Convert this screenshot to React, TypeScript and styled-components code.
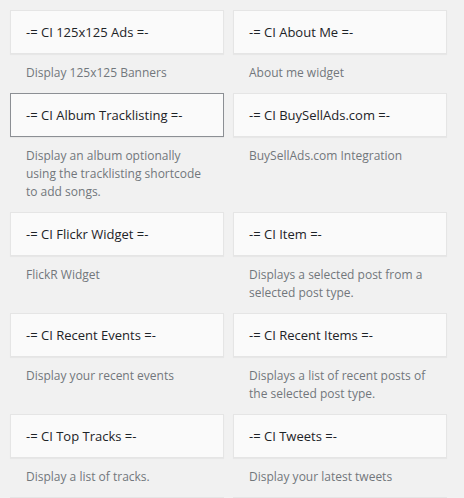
import React from "react";
import styled, { createGlobalStyle } from "styled-components";

const Global = createGlobalStyle`
  html, body { margin: 0; padding: 0; background: #f1f1f1; }
  body { font-family: "Open Sans", "Liberation Sans", sans-serif; }
`;

const Grid = styled.div`
  display: grid;
  grid-template-columns: 214px 214px;
  column-gap: 9px;
  padding: 10px 0 0 10px;
  align-items: start;
`;

const Item = styled.div`
  display: flex;
  flex-direction: column;
`;

const Card = styled.div<{ $focused?: boolean }>`
  height: 42px;
  display: flex;
  align-items: center;
  padding: 0 15px;
  background: #fafafa;
  border: 1px solid ${(p) => (p.$focused ? "#8c8f94" : "#e5e5e5")};
  box-shadow: 0 1px 1px rgba(0, 0, 0, 0.04);
`;

const Title = styled.h3`
  margin: 0;
  font-size: 13px;
  font-weight: 400;
  line-height: 18px;
  color: #1d2327;
  white-space: nowrap;
`;

const Desc = styled.div`
  padding: 10px 15px 11px 16px;
  font-size: 12px;
  line-height: 18px;
  color: #72777c;
`;

const widgets = [
  { title: "-= CI 125x125 Ads =-", desc: "Display 125x125 Banners" },
  { title: "-= CI About Me =-", desc: "About me widget" },
  {
    title: "-= CI Album Tracklisting =-",
    desc: "Display an album optionally using the tracklisting shortcode to add songs.",
    focused: true,
  },
  { title: "-= CI BuySellAds.com =-", desc: "BuySellAds.com Integration" },
  { title: "-= CI Flickr Widget =-", desc: "FlickR Widget" },
  { title: "-= CI Item =-", desc: "Displays a selected post from a selected post type." },
  { title: "-= CI Recent Events =-", desc: "Display your recent events" },
  { title: "-= CI Recent Items =-", desc: "Displays a list of recent posts of the selected post type." },
  { title: "-= CI Top Tracks =-", desc: "Display a list of tracks." },
  { title: "-= CI Tweets =-", desc: "Display your latest tweets" },
  { title: "", desc: "" },
  { title: "", desc: "" },
];

export default function App() {
  return (
    <>
      <Global />
      <Grid>
        {widgets.map((w, i) => (
          <Item key={i}>
            <Card $focused={w.focused}>
              <Title>{w.title}</Title>
            </Card>
            <Desc>{w.desc}</Desc>
          </Item>
        ))}
      </Grid>
    </>
  );
}
